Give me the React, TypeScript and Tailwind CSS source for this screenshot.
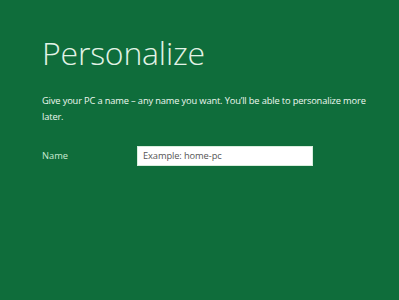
import React from 'react';

export default function App() {
    return (
        <main className="w-[399px] h-[300px] bg-[#0f6d3b] overflow-hidden font-['Segoe_UI','Open_Sans',sans-serif] text-white">
            <div className="pl-[42px] pt-[33px] pr-4">
                <h1 className="text-[32px] leading-[40px] font-light text-[#e2f3e6] tracking-[-0.2px]">Personalize</h1>

                <p className="mt-[20px] w-[340px] text-[9.3px] leading-[16px] tracking-[-0.15px] text-[#eef8f0]">
                    Give your PC a name – any name you want. You’ll be able to personalize more later.
                </p>

                <div className="mt-[21px] flex items-center">
                    <label className="w-[95px] text-[9.3px] text-[#c9ebd2]">Name</label>
                    <div className="w-[176px] h-[20px] bg-white border border-[#d8eedd] flex items-center px-[5px]">
                        <span className="text-[9.3px] tracking-[-0.1px] text-[#555]">Example: home-pc</span>
                    </div>
                </div>
            </div>
        </main>
    );
}
